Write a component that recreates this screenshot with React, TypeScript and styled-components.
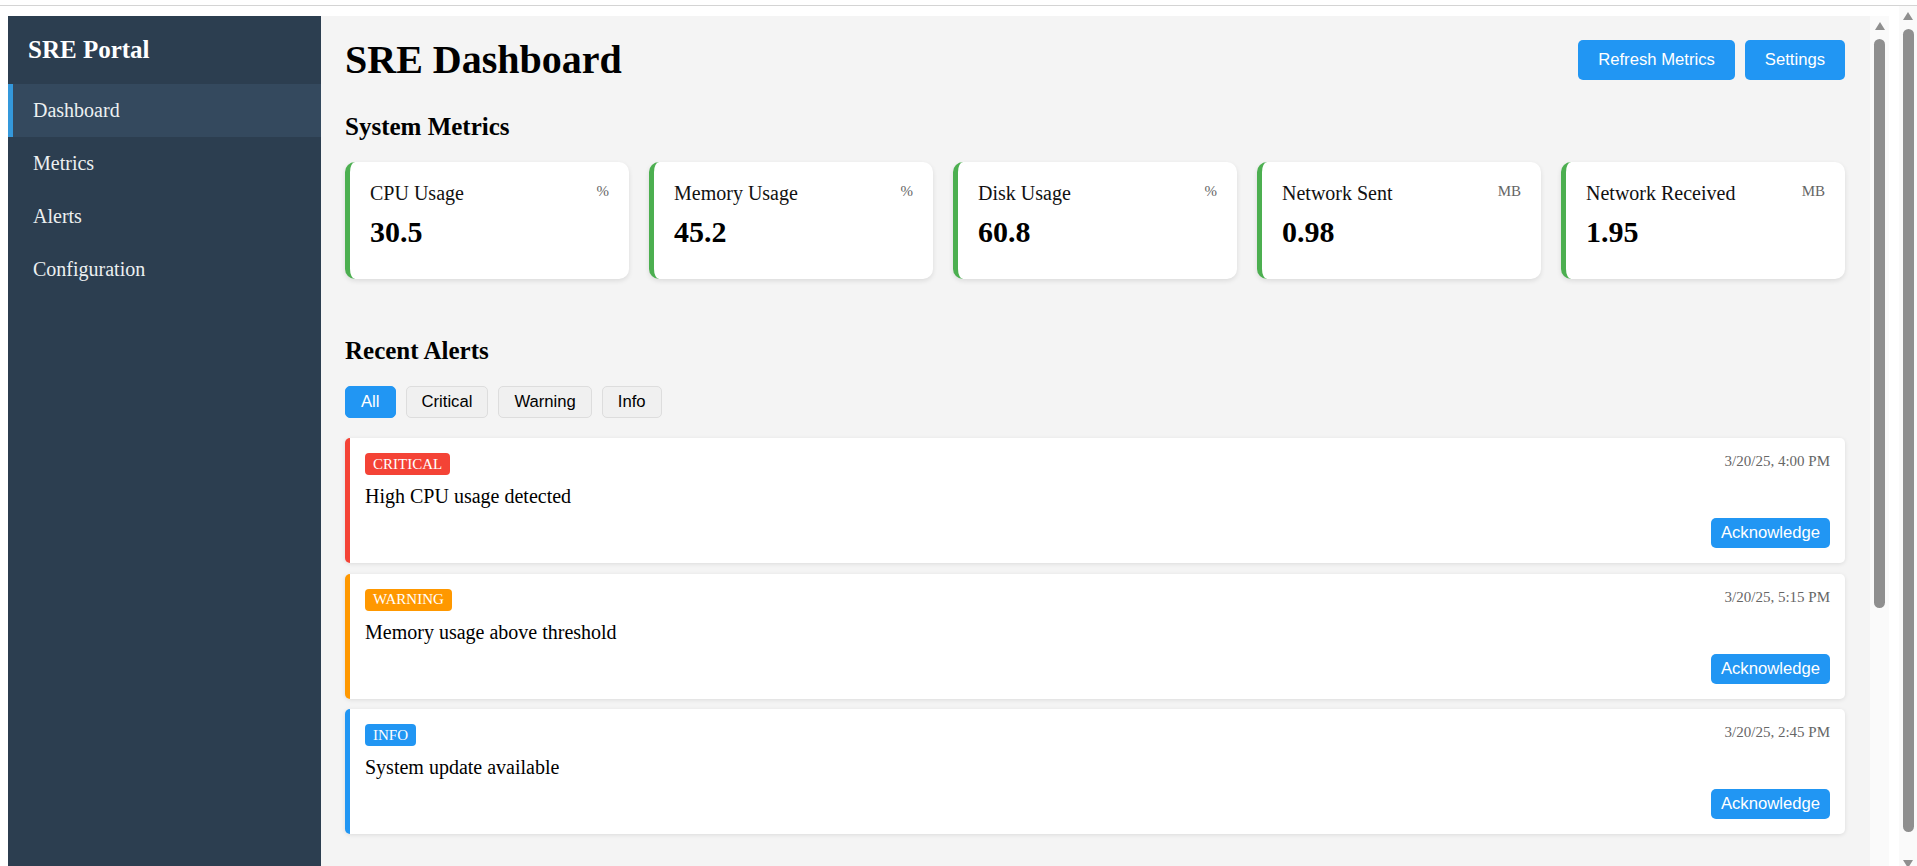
import React, { useState } from 'react';
import styled, { createGlobalStyle } from 'styled-components';

interface IAlert {
  id: number;
  severity: 'critical' | 'warning' | 'info';
  message: string;
  time: string;
}

interface IMetric {
  label: string;
  value: string;
  unit: string;
}

interface ISeverityProps {
  severity: 'critical' | 'warning' | 'info';
}

interface IActiveProps {
  active?: boolean;
}

interface ITrackProps {
  width: number;
}

interface IThumbProps {
  size: number;
}

const severityColors = {
  critical: '#f44336',
  warning: '#ff9800',
  info: '#2196f3',
};

const GlobalStyle = createGlobalStyle`
  html, body {
    margin: 0;
    height: 100%;
    overflow: hidden;
    background: #ffffff;
  }
  body {
    font-family: "Liberation Serif", "Times New Roman", serif;
  }
`;

// the page was captured at 125%, so sizes below are css px * 1.25

const TopRule = styled.div`
  height: 5px;
  border-bottom: 1px solid #d4d4d4;
  background: #ffffff;
`;

const Viewport = styled.div`
  display: flex;
  height: 866px;
  overflow: hidden;
  background: #ffffff;
`;

const PageContent = styled.div`
  flex: 1;
  min-width: 0;
  padding: 10px 10px 0 8px;
`;

// scrollbar look-alike (a screenshot carries no native scrollbars)
const ScrollTrack = styled.div<ITrackProps>`
  width: ${({ width }) => width}px;
  flex-shrink: 0;
  display: flex;
  flex-direction: column;
  align-items: center;
  padding-top: 6px;
  background: #fafafa;
`;

const ArrowUp = styled.div`
  width: 0;
  height: 0;
  border-left: 5.5px solid transparent;
  border-right: 5.5px solid transparent;
  border-bottom: 8px solid #8f8f8f;
  margin-bottom: 9px;
`;

const ArrowDown = styled.div`
  width: 0;
  height: 0;
  border-left: 5.5px solid transparent;
  border-right: 5.5px solid transparent;
  border-top: 8px solid #8f8f8f;
  margin-top: 28px;
`;

const Thumb = styled.div<IThumbProps>`
  width: 11px;
  height: ${({ size }) => size}px;
  flex-shrink: 0;
  border-radius: 6px;
  background: #8f8f8f;
`;

const Layout = styled.div`
  display: flex;
  height: 866px;
`;

const Sidebar = styled.nav`
  width: 313px;
  flex-shrink: 0;
  background-color: #2c3e50;
  color: #ecf0f1;
`;

const SidebarHeader = styled.div`
  padding: 20px;
`;

const Brand = styled.h2`
  margin: 0;
  font-size: 25px;
  font-weight: bold;
  color: #ffffff;
`;

const NavList = styled.ul`
  list-style: none;
  margin: 0;
  padding: 0;
`;

const NavItem = styled.li<IActiveProps>`
  padding: 15px 20px;
  font-size: 20px;
  color: #ecf0f1;
  cursor: pointer;
  border-left: 5px solid ${({ active }) => (active ? '#3498db' : 'transparent')};
  background-color: ${({ active }) => (active ? '#34495e' : 'transparent')};
`;

const Main = styled.main`
  flex: 1;
  min-width: 0;
  display: flex;
`;

const MainScroll = styled.div`
  flex: 1;
  min-width: 0;
  overflow: hidden;
  background-color: #f4f4f4;
  padding: 20px 25px 25px 24px;
`;

const Header = styled.header`
  display: flex;
  justify-content: space-between;
  align-items: center;
  margin-bottom: 30px;
`;

const Title = styled.h1`
  margin: 0;
  font-size: 40px;
  font-weight: bold;
  color: #000000;
`;

const HeaderActions = styled.div`
  display: flex;
  gap: 10px;
`;

const PrimaryButton = styled.button`
  font-family: "Liberation Sans", Arial, sans-serif;
  font-size: 16.67px;
  padding: 10px 20px;
  border: none;
  border-radius: 5px;
  background-color: #2196f3;
  color: #ffffff;
  cursor: pointer;
`;

const Section = styled.section`
  margin-bottom: 58.5px;
`;

const SectionTitle = styled.h2`
  margin: 0 0 20.75px;
  font-size: 25px;
  font-weight: bold;
  color: #000000;
`;

const MetricsGrid = styled.div`
  display: grid;
  grid-template-columns: repeat(5, 1fr);
  gap: 20px;
`;

const MetricCard = styled.div`
  background: #ffffff;
  border-radius: 10px;
  border-left: 5px solid #4caf50;
  padding: 20px;
  box-shadow: 0 2px 5px rgba(0, 0, 0, 0.1);
`;

const MetricHeader = styled.div`
  display: flex;
  justify-content: space-between;
  align-items: flex-start;
`;

const MetricLabel = styled.span`
  font-size: 20px;
  color: #111111;
`;

const MetricUnit = styled.span`
  font-size: 15px;
  color: #666666;
  padding-top: 1px;
`;

const MetricValue = styled.div`
  margin: 10px 0;
  font-size: 30px;
  font-weight: bold;
  color: #000000;
`;

const FilterBar = styled.div`
  display: flex;
  gap: 10px;
  margin-bottom: 20px;
`;

const FilterButton = styled.button<IActiveProps>`
  font-family: "Liberation Sans", Arial, sans-serif;
  font-size: 16.67px;
  padding: 5px 15px;
  border-radius: 5px;
  cursor: pointer;
  border: 1px solid ${({ active }) => (active ? '#2196f3' : '#dddddd')};
  background-color: ${({ active }) => (active ? '#2196f3' : '#f0f0f0')};
  color: ${({ active }) => (active ? '#ffffff' : '#000000')};
`;

const AlertList = styled.div`
  display: flex;
  flex-direction: column;
  gap: 10.5px;
`;

const AlertCard = styled.div<ISeverityProps>`
  background: #ffffff;
  border-radius: 5px;
  border-left: 5px solid ${({ severity }) => severityColors[severity]};
  padding: 15px;
  box-shadow: 0 1px 4px rgba(0, 0, 0, 0.1);
`;

const AlertHeader = styled.div`
  display: flex;
  justify-content: space-between;
  align-items: flex-start;
  margin-bottom: 10px;
`;

const SeverityBadge = styled.span<ISeverityProps>`
  display: inline-block;
  padding: 2.5px 8px;
  border-radius: 4px;
  font-size: 15px;
  text-transform: uppercase;
  color: #ffffff;
  background-color: ${({ severity }) => severityColors[severity]};
`;

const AlertTime = styled.span`
  font-size: 15px;
  color: #666666;
`;

const AlertMessage = styled.div`
  font-size: 20px;
  color: #000000;
  margin-bottom: 10px;
`;

const AlertActions = styled.div`
  display: flex;
  justify-content: flex-end;
`;

const AckButton = styled.button`
  font-family: "Liberation Sans", Arial, sans-serif;
  font-size: 16.67px;
  padding: 5px 10px;
  border: none;
  border-radius: 5px;
  background-color: #2196f3;
  color: #ffffff;
  cursor: pointer;
`;

const metrics: IMetric[] = [
  { label: 'CPU Usage', value: '30.5', unit: '%' },
  { label: 'Memory Usage', value: '45.2', unit: '%' },
  { label: 'Disk Usage', value: '60.8', unit: '%' },
  { label: 'Network Sent', value: '0.98', unit: 'MB' },
  { label: 'Network Received', value: '1.95', unit: 'MB' },
];

const alerts: IAlert[] = [
  { id: 1, severity: 'critical', message: 'High CPU usage detected', time: '3/20/25, 4:00 PM' },
  { id: 2, severity: 'warning', message: 'Memory usage above threshold', time: '3/20/25, 5:15 PM' },
  { id: 3, severity: 'info', message: 'System update available', time: '3/20/25, 2:45 PM' },
];

const filters = ['All', 'Critical', 'Warning', 'Info'];
const navItems = ['Dashboard', 'Metrics', 'Alerts', 'Configuration'];

export default function App() {
  const [filter, setFilter] = useState('All');

  const visibleAlerts = alerts.filter(
    (a) => filter === 'All' || a.severity === filter.toLowerCase()
  );

  return (
    <>
      <GlobalStyle />
      <TopRule />
      <Viewport>
        <PageContent>
          <Layout>
            <Sidebar>
              <SidebarHeader>
                <Brand>SRE Portal</Brand>
              </SidebarHeader>
              <NavList>
                {navItems.map((item, i) => (
                  <NavItem key={item} active={i === 0}>
                    {item}
                  </NavItem>
                ))}
              </NavList>
            </Sidebar>

            <Main>
              <MainScroll>
                <Header>
                  <Title>SRE Dashboard</Title>
                  <HeaderActions>
                    <PrimaryButton>Refresh Metrics</PrimaryButton>
                    <PrimaryButton>Settings</PrimaryButton>
                  </HeaderActions>
                </Header>

                <Section>
                  <SectionTitle>System Metrics</SectionTitle>
                  <MetricsGrid>
                    {metrics.map((m) => (
                      <MetricCard key={m.label}>
                        <MetricHeader>
                          <MetricLabel>{m.label}</MetricLabel>
                          <MetricUnit>{m.unit}</MetricUnit>
                        </MetricHeader>
                        <MetricValue>{m.value}</MetricValue>
                      </MetricCard>
                    ))}
                  </MetricsGrid>
                </Section>

                <Section>
                  <SectionTitle>Recent Alerts</SectionTitle>
                  <FilterBar>
                    {filters.map((f) => (
                      <FilterButton key={f} active={filter === f} onClick={() => setFilter(f)}>
                        {f}
                      </FilterButton>
                    ))}
                  </FilterBar>
                  <AlertList>
                    {visibleAlerts.map((a) => (
                      <AlertCard key={a.id} severity={a.severity}>
                        <AlertHeader>
                          <SeverityBadge severity={a.severity}>{a.severity}</SeverityBadge>
                          <AlertTime>{a.time}</AlertTime>
                        </AlertHeader>
                        <AlertMessage>{a.message}</AlertMessage>
                        <AlertActions>
                          <AckButton>Acknowledge</AckButton>
                        </AlertActions>
                      </AlertCard>
                    ))}
                  </AlertList>
                </Section>
              </MainScroll>
              <ScrollTrack width={19}>
                <ArrowUp />
                <Thumb size={569} />
              </ScrollTrack>
            </Main>
          </Layout>
        </PageContent>
        <ScrollTrack width={18}>
          <ArrowUp />
          <Thumb size={803} />
          <ArrowDown />
        </ScrollTrack>
      </Viewport>
    </>
  );
}
